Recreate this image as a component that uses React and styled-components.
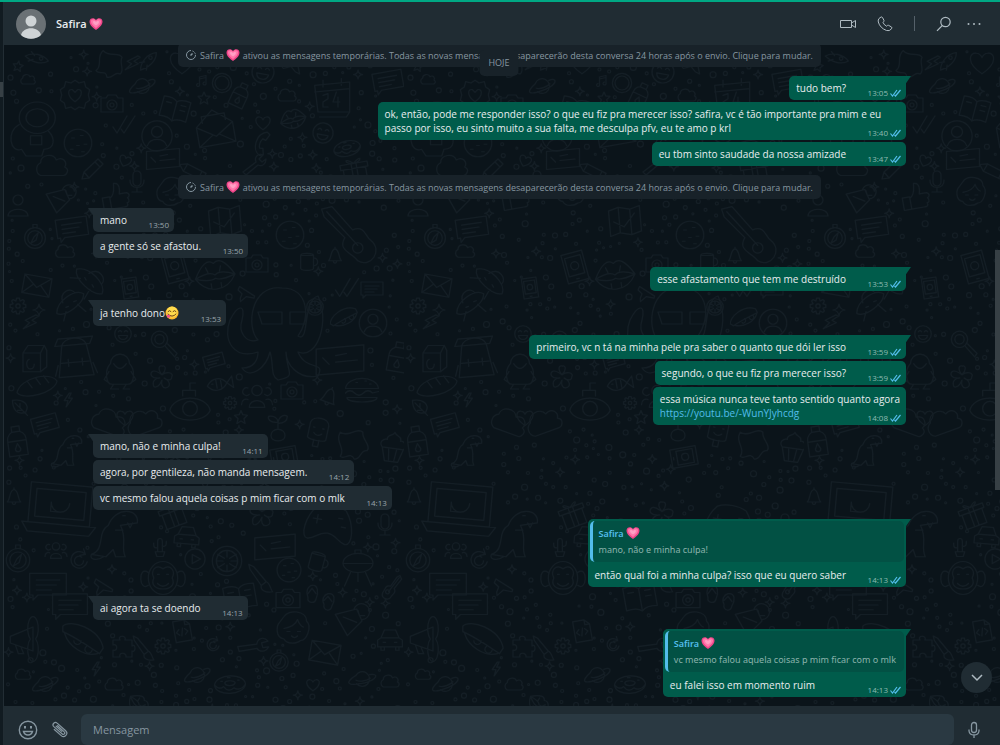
import React from 'react';
import styled, {createGlobalStyle, css} from 'styled-components';

const Color = {
    BACK: '#0b141a',
    DOODLE: '#141e25',
    PANEL: '#202c33',
    FIELD: '#2a3942',
    NOTICE: '#182229',
    GREEN: '#00a884',
    OUT: '#005c4b',
    QUOTE: '#025144',
    TEXT: '#e9edef',
    MUTED: '#8696a0',
    ICON: '#aebac1',
    BLUE: '#53bdeb',
};

const NOTICE_TEXT = 'ativou as mensagens temporárias. Todas as novas mensagens desaparecerão desta conversa 24 horas após o envio. Clique para mudar.';

const groups = [
    {notice: true},
    {
        out: true,
        items: [
            {text: 'tudo bem?', time: '13:05'},
            {text: 'ok, então, pode me responder isso? o que eu fiz pra merecer isso? safira, vc é tão importante pra mim e eu passo por isso, eu sinto muito a sua falta, me desculpa pfv, eu te amo p krl', time: '13:40'},
            {text: 'eu tbm sinto saudade da nossa amizade', time: '13:47'},
        ],
    },
    {notice: true},
    {
        items: [
            {text: 'mano', time: '13:50'},
            {text: 'a gente só se afastou.', time: '13:50'},
        ],
    },
    {out: true, items: [{text: 'esse afastamento que tem me destruído', time: '13:53'}]},
    {items: [{text: 'ja tenho dono', face: true, time: '13:53'}]},
    {
        out: true,
        items: [
            {text: 'primeiro, vc n tá na minha pele pra saber o quanto que dói ler isso', time: '13:59'},
            {text: 'segundo, o que eu fiz pra merecer isso?', time: '13:59'},
            {text: 'essa música nunca teve tanto sentido quanto agora', link: 'https://youtu.be/-WunYJyhcdg', time: '14:08'},
        ],
    },
    {
        items: [
            {text: 'mano, não e minha culpa!', time: '14:11'},
            {text: 'agora, por gentileza, não manda mensagem.', time: '14:12'},
            {text: 'vc mesmo falou aquela coisas p mim ficar com o mlk', time: '14:13'},
        ],
    },
    {
        out: true,
        items: [{
            quote: 'mano, não e minha culpa!',
            text: 'então qual foi a minha culpa? isso que eu quero saber',
            time: '14:13',
        }],
    },
    {items: [{text: 'ai agora ta se doendo', time: '14:13'}]},
    {
        out: true,
        items: [{
            quote: 'vc mesmo falou aquela coisas p mim ficar com o mlk',
            text: 'eu falei isso em momento ruim',
            time: '14:13',
        }],
    },
];

// every shape lives in a -12..12 box
const shapes = {
    star: 'M0-11 3-4 11-3 5 3 7 11 0 7-7 11-5 3-11-3-3-4Z',
    spark: 'M0-11Q1-1 11 0 1 1 0 11-1 1-11 0-1-1 0-11Z',
    heart: 'M0 10C-15 0-12-10-5-9-2-9 0-5 0-5S2-9 5-9C12-10 15 0 0 10Z',
    bolt: 'M2-11-6 1H0L-3 11 7-3H1L5-11Z',
    note: 'M-5 7V-8L8-11V4M-5-4 8-7M-5 7A3 3 0 1 1-8 5M8 4A3 3 0 1 1 5 2',
    drop: 'M0-10C4-3 7 1 6 5A6 6 0 0 1-6 5C-7 1-4-3 0-10Z',
    cloud: 'M-8 6A5 5 0 0 1-8-3C-8-9 1-10 3-5 8-8 11-3 9 0 13 2 10 6 8 6Z',
    planet: 'M-6-2A6.500 6.500 0 1 1-4 5M-6-2C-15 6-12 9 3 3 14-2 14-8 6-5M-5 2C-1 3 4 1 7-2',
    camera: 'M-11-6H-6L-4-9H4L6-6H11V8H-11ZM5 1A5 5 0 1 1-5 1 5 5 0 1 1 5 1M2 1A2 2 0 1 1-2 1 2 2 0 1 1 2 1',
    ring: 'M11 0A11 11 0 1 1-11 0 11 11 0 1 1 11 0M8 0A8 8 0 1 1-8 0 8 8 0 1 1 8 0',
    compass: 'M10 1A10 10 0 1 1-10 1 10 10 0 1 1 10 1M7 1A7 7 0 1 1-7 1 7 7 0 1 1 7 1M3-4 1 3-4 6-1 0ZM-2-9V-12H2V-9',
    person: 'M11 0A11 11 0 1 1-11 0 11 11 0 1 1 11 0M4-3A4 4 0 1 1-4-3 4 4 0 1 1 4-3M-7 7C-5 1 5 1 7 7',
    bust: 'M5-5A5 5 0 1 1-5-5 5 5 0 1 1 5-5M-10 11C-10 2 10 2 10 11Z',
    people: 'M4-5A4 4 0 1 1-4-5 4 4 0 1 1 4-5M-6 8C-6 1 6 1 6 8ZM-6-2A3 3 0 1 1-7-7M-12 6C-12 2-9 1-7 2M6-2A3 3 0 1 0 7-7M12 6C12 2 9 1 7 2',
    smile: 'M11 0A11 11 0 1 1-11 0 11 11 0 1 1 11 0M-6-3Q-4-6-2-3M2-3Q4-6 6-3M-6 2H6C5 9-5 9-6 2Z',
    cookie: 'M11 0A11 11 0 1 1-11 0 11 11 0 1 1 11 0M-5-4H-3M2-6H4M5 1H7M-1 2H1M-6 5H-4M3 7H5',
    badge: 'M0-11 3-9 7-10 8-6 11-4 10 0 11 4 8 6 7 10 3 9 0 11-3 9-7 10-8 6-11 4-10 0-11-4-8-6-7-10-3-9ZM0 5C-7 0-5-5-2-4L0-2 2-4C5-5 7 0 0 5Z',
    gear: 'M-2-11H2L3-7 7-9 9-7 7-3 11-2V2L7 3 9 7 7 9 3 7 2 11H-2L-3 7-7 9-9 7-7 3-11 2V-2L-7-3-9-7-7-9-3-7ZM3 0A3 3 0 1 1-3 0 3 3 0 1 1 3 0',
    citrus: 'M11 0A11 11 0 1 1-11 0 11 11 0 1 1 11 0M2-2 7-5M-2-2-7-5M2 2 7 5M-2 2-7 5M0-3V-8M0 3V8M-3 0H-8M3 0H8M8 0A8 8 0 1 1-8 0 8 8 0 1 1 8 0',
    slice: 'M-11-5 5-9 9 0-2 11ZM-5-3 5 1M3-9A6 6 0 1 1 9-1M6-8 7-4 11-4',
    flower: 'M0-3C-5-9-2-12 0-11 4-12 4-7 0-3 6-7 11-4 9-1 9 3 4 2 2 0 8 3 8 8 4 9 0 10-1 5 0 2-3 9-8 10-8 6-9 2-5 0-2 0-9 1-12-3-9-6-6-8-2-4 0-3',
    leaf: 'M-9-8C4-10 12-3 7 6-4 11-9 1-9-8ZM-6-5 9 10M0 1V-4M3 4H-3',
    bell: 'M-8 6C-4 2-6-8 0-9 6-8 4 2 8 6ZM-2 6C-2 10 2 10 2 6M0-9V-11',
    mug: 'M-8-6V8C-7 11 5 11 6 8V-6ZM-8-6C-8-9 6-9 6-6M6-3C12-4 12 6 6 5',
    envelope: 'M-11-7H11V8H-11ZM-11-7 0 2 11-7M-11 8-3 0M11 8 3 0',
    open: 'M-11-2 0-11 11-2V10H-11ZM-11-2 0 5 11-2M-7-4V-8H7V-4M-11 10-2 4M11 10 2 4',
    chat: 'M-11-7H11V6H-6L-9 9V6H-11ZM-7-3H7M-7 0H5M-7 3H2',
    phone: 'M-8-10-4-11-1-4-4-2C-3 2 0 5 3 6L5 3 11 6 10 10C0 15-13 1-8-10Z',
    mic: 'M-4-7A4 4 0 0 1 4-7V0A4 4 0 0 1-4 0ZM-7-2C-8 8 8 8 7-2M0 6V10M-5 10H5',
    tablet: 'M-8-11H8V11H-8ZM-6-8H6V6H-6ZM-1 9H1M3-1A3 3 0 1 1-3-1 3 3 0 1 1 3-1',
    laptop: 'M-10-8H10V5H-10ZM-8-6H8V3H-8ZM-12 5H12L10 8H-10ZM3-2A3 3 0 1 1-3-2L-3 1H0A3 3 0 0 0 3-2',
    pencil: 'M-11 10-9 3 5-10 10-5-4 9ZM-9 3-4 9M2-7 7-2',
    checks: 'M-11 2-7 8 3-9M-3 4 0 8 11-9',
    mag: 'M4-4A7 7 0 1 1-10-4 7 7 0 1 1 4-4M1-4A4 4 0 1 1-7-4 4 4 0 1 1 1-4M2 2 10 11 12 8 4 0',
    play: 'M11 0A11 11 0 1 1-11 0 11 11 0 1 1 11 0M-3-5V5L6 0Z',
    redo: 'M6-6A9 9 0 1 0 9 3M5-11 7-5 1-4M3-2A5 5 0 1 0 5 2',
    car: 'M-11 1-8-1-5-8H5L8-1 11 1V7H-11ZM-8-1H8M-8 7V10H-5V7M5 7V10H8V7M-6 3H-4M4 3H6',
    pad: 'M-7-8C-3-10 3-10 7-8 12-2 13 8 9 8 5 7 4 4 0 4-4 4-5 7-9 8-13 8-12-2-7-8ZM-6-4V0M-8-2H-4M4-4H6M6 0H8',
    book: 'M-11-8C-5-9-2-8 0-6 2-8 5-9 11-8V8C5 7 2 8 0 10-2 8-5 7-11 8ZM0-6V10M-8-4H-4M4-4H8M4 0H8',
    box: 'M-8-4H6V11H-8ZM-8-4-4-10H9L6-4M9-10 11-6V7L6 11M-3 1A3 4 0 1 0 1 5',
    pack: 'M-7-7C-5-12 5-12 7-7L10 11H-10ZM-11-7H9L11-11H-9ZM-8 3H8M-4 1V5M4 1V5M-10 4-12 10M10 4 12 10',
    bird: 'M-6-4A6 6 0 0 1 6-4C10 0 9 9 5 9H-5C-9 9-10 0-6-4ZM-4-4Q0 2 4-4M-4 9-6 12H-1M4 9 2 12H6M-7 1-10 6-7 8M7 1 10 6 7 8',
    fish: 'M-11 0C-6-7 2-6 6 0L11-5V5L6 0C2 6-6 7-11 0ZM-7-1H-6M-3-4V3M1-3V3',
    sub: 'M-11 3C-9-6 9-6 11 3 8 10-8 10-11 3ZM-4-5V-8H3V-5M0-8V-12H3M4 2A4 4 0 1 1-4 2 4 4 0 1 1 4 2',
    burger: 'M-11-1C-10-10 10-10 11-1ZM-11 2Q-8-1-5 2T1 2 7 2L11 1M-10 5H10C10 9-10 9-10 5M-4-5H-3M2-6H3M5-4H6',
    ice: 'M-7 5V-6C-6-12 6-12 7-6V5C5 7-5 7-7 5ZM-2 6V11H2V6M-4-3H-3M3-3H4M-3 1Q0 4 3 1',
    cup: 'M-8 1H8L5 11H-5ZM-8 1C-12-3-6-6-5-5-6-9-1-8 0-11 1-8 6-9 5-5 6-6 12-3 8 1M-3 2-2 10M3 2 2 10',
    bottle: 'M-3-11H3V-7C7-5 7-2 7 1V11H-7V1C-7-2-7-5-3-7ZM-7 0H7M-3-7H3M0 2 2 6A2 2 0 1 1-2 6Z',
    lips: 'M-12 1C-7-8-3-10 0-7 3-10 7-8 12 1 6 11-6 11-12 1ZM-12 1Q-3-3 0 0 3-3 12 1 3 4 0 2-3 4-12 1M-5-5-4-2M4-5 3-2M-3 5V8M3 5V8',
    ufo: 'M-12 4C-9-5 7-9 12-3 10 4-7 9-12 4ZM-5-2C-5-11 5-11 6-6M-5 5-9 11M5 3 9 10M-4 2H-2M3 0H5',
    squid: 'M-4 2C-7-1-6-12 2-11 9-11 9-3 6 1 9 3 7-8 11-9 14-3 11 7 6 5 8 10 13 7 11 11 6 12 3 8 3 5 3 10 6 11 1 12-1 11 0 8-1 5-2 9-6 12-8 9-5 9-4 7-4 5-10 7-13 2-11-3-9-7-7-7-8-3-9 0-7 3-4 2ZM-4-5H2V-2H-3ZM4-5H8V-2H4Z',
    dino: 'M-11 8C-5 6-9-1-4-4-1-12 9-11 8-5L1-4C4 2 1 5 3 9H-1L-2 6-5 9ZM2-8H3M-1-2H2M4-5 5-3 6-5M-11 8C-12 10-9 11-6 9',
    plane: 'M-11 2 10-9 12-7 5 1 7 11 3 9-1 4-8 6Z',
    guitar: 'M-11-10-7-11 1-2C6-4 6 1 8 2 13 6 8 13 3 10 1 7-5 6-2 1L-10-7ZM5 5A2 2 0 1 1 1 5 2 2 0 1 1 5 5M-9-9 3 4',
    pizza: 'M-11-7C-7-11 9-6 11 5L9 8C3 4-4-1-11-4ZM-10-3C-8 4 1 10 8 8M-5 1A2 2 0 1 0-1 1M2 4A2 2 0 1 0 5 6',
    horn: 'M-11-2 6-9V9L-11 3ZM8 0A4 9 0 1 1 4 0 4 9 0 1 1 8 0M-7 5-5 11H-1L-3 6',
    puzzle: 'M-10-8H-3C-6-13 4-13 2-8H9V-2C13-5 13 5 9 3V9H3C4 4-5 4-3 9H-10V2C-5 4-5-5-10-3Z',
    brush: 'M-9-11-5-9 5 3 1 6-8-7ZM1 6C0 10 5 12 10 11 8 8 8 4 5 3',
    code: 'M-8-11H4L9-6V11H-8ZM4-11V-6H9M-3-2-6 1-3 4M3-2 6 1 3 4M1-3-1 5',
    tool: 'M-11 7 2-3C0-8 4-12 9-10L5-6 8-3 12-6C12-1 8 2 4 0L-8 10Z',
    monkey: 'M8 0A8 9 0 1 1-8 0 8 9 0 1 1 8 0M-8-3C-14-7-13 8-8 4M8-3C14-7 13 8 8 4M0-5C-4-8-7-4-5 0-9 8 9 8 5 0 7-4 4-8 0-5M-3-2H-2M2-2H3M-3 3Q0 6 3 3',
    girl: 'M-6-7C-3-12 9-11 9-4 13 0 9 9 5 9 3 11-4 12-6 8-12 7-11-1-9-3ZM-6 1C-1 0 2-2 3-5 4-2 6 0 7 0M-4 3H-2M3 3H5M-1 6Q1 8 3 6',
    blob: 'M-9-9C-3-5 3-13 7-9 6-4 13 0 10 4 5 3 6 10 1 10-2 4-6 11-9 8-5 2-13-2-9-9Z',
    thumb: 'M-11-1H-5V9H-11ZM-5 0C0-2-1-8 0-11 5-11 4-5 3-2H9C12 0 10 2 9 2 11 5 9 6 8 6 9 9 7 9 5 9H-5',
    map: 'M-11-8-4-10 4-8 11-10V8L4 10-4 8-11 10ZM-4-10V8M4-8V10M-8 0-1 4 7-5',
    cal: 'M-11-7 10-9V9H-9ZM-11-3 10-5M-6-10V-6M5-11V-7M-8 12H8L10 9M-6-1-3-2V1L-6 3V6H-3M2-3 0 3H4M3 0V6',
    gift: 'M-9-3H9V10H-9ZM-11-7H11V-3H-11ZM-2-7V10M2-7V10M0-7C-8-14-7-7 0-7 8-14 7-7 0-7',
    grill: 'M-10-3C-10-12 10-12 10-3ZM-10-3C-9 5 9 5 10-3M-5 3-9 12M5 3 9 12M0 3V9M-2-10V-12H2V-10',
    flops: 'M-7-10C-1-12-1-4-3 0-4 4-10 3-9-1-11-6-9-9-7-10ZM-9-4-6-8-3-4M6-4C12-5 11 2 9 5 8 10 2 9 3 4 1 0 3-3 6-4ZM3 1 6-2 9 2',
    cactus: 'M-3 6V-7C-3-12 3-12 3-7V6M-3 1C-8 2-8-1-8-5M3-1C8 0 8-3 8-7M-6 6H6L4 12H-4Z',
    donut: 'M12 0C11 9-11 10-12 1-11-8 11-9 12 0ZM4-1C3 2-4 2-4-1-3-3 3-3 4-1M-12 1Q-8 5-5 2-1 7 3 3 8 6 12 0M-7-2H-6M6-3H7M-2-5H0',
    bread: 'M-12 4C-10-5 8-9 12-3 11 4-8 9-12 4ZM-6-3-3 1M-1-5 2-1M4-6 7-2',
    bars: 'M-11-5 11-7V5L-11 7ZM-8-1-5 2M-2 1 8 0M-2-2 3-3',
    rocket: 'M-9 11C-9 2-1-9 10-10 10 0 1 8-9 11ZM-4 1-10 2M-1 5-2 11M5-4A2 2 0 1 1 1-4 2 2 0 1 1 5-4',
    plant: 'M0 11C-8 11-8 2 0 1 8 2 8 11 0 11ZM0 1V-5C-7-4-9-8-8-10-3-11 0-8 0-5 1-10 5-12 8-10 8-6 5-4 0-4',
    astro: 'M9-5A8 7 0 1 1-7-5 8 7 0 1 1 9-5M6-5A5 4 0 1 1-4-5 5 4 0 1 1 6-5M-7-2C-13 1-11 11-6 9L-4 12H3L4 9C9 9 9 4 6 1M-2 3H3V7H-2Z',
};

// shape, x, y, size, rotation inside the 400 x 720 tile
const doodles = [
    ['star', 14, 21, 11, 10], ['rocket', 33, 13, 20, 60], ['blob', 106, 20, 30, 20], ['bolt', 128, 18, 20, 30],
    ['rocket', 144, 16, 20, 0], ['heart', 178, 18, 26, 0], ['ring', 218, 38, 21, 0], ['smile', 259, 27, 24, 10],
    ['plane', 288, 17, 26, 0], ['badge', 71, 50, 32, 0], ['cloud', 24, 35, 16, 0], ['planet', 138, 41, 27, 0],
    ['camera', 108, 59, 24, 0], ['book', 171, 64, 30, 15], ['note', 198, 36, 12, 0], ['bottle', 236, 50, 26, 25],
    ['cloud', 283, 51, 20, 0], ['cal', 329, 52, 40, 0], ['chat', 384, 36, 32, -10], ['star', 200, 53, 13, 0],
    ['astro', 31, 84, 54, 0], ['cookie', 74, 98, 30, 0], ['checks', 120, 80, 24, 0], ['person', 153, 91, 33, 0],
    ['open', 211, 83, 40, -10], ['heart', 259, 78, 16, 0], ['lips', 289, 74, 26, -15], ['smile', 319, 88, 22, 10],
    ['phone', 259, 98, 22, 60], ['donut', 343, 103, 27, -10], ['pencil', 89, 124, 24, 0], ['heart', 121, 116, 13, 20],
    ['bars', 159, 114, 36, 0], ['mic', 133, 137, 24, 0], ['thumb', 112, 152, 30, -10], ['girl', 167, 146, 32, 0],
    ['cloud', 48, 122, 34, 0], ['pencil', 190, 127, 26, 70], ['tool', 250, 120, 24, 0], ['gift', 351, 127, 30, -10],
    ['slice', 55, 155, 28, 0], ['bust', 14, 160, 24, 0], ['compass', 31, 192, 25, 0], ['chat', 68, 183, 34, -8],
    ['cloud', 61, 207, 21, 0], ['map', 221, 176, 34, -5], ['cookie', 286, 190, 30, 0], ['guitar', 346, 190, 62, 0],
    ['mug', 304, 216, 22, 0], ['bell', 331, 211, 19, 0], ['camera', 253, 219, 24, 0], ['lips', 211, 230, 40, -8],
    ['tablet', 171, 222, 32, -15], ['envelope', 33, 240, 30, 10], ['ufo', 66, 258, 32, -20], ['gear', 14, 261, 17, 0],
    ['spark', 35, 265, 13, 0], ['ufo', 86, 236, 34, 60], ['tablet', 126, 243, 22, -8], ['plane', 241, 248, 18, 60],
    ['checks', 343, 243, 25, 0], ['chat', 368, 244, 24, 0], ['squid', 270, 287, 96, 0], ['citrus', 311, 262, 18, 0],
    ['pizza', 340, 272, 28, -60], ['person', 369, 278, 30, 0], ['bolt', 26, 277, 20, 30], ['box', 29, 313, 30, 0],
    ['pack', 71, 312, 42, -5], ['bird', 116, 325, 38, 0], ['mag', 159, 299, 28, 0], ['smile', 119, 289, 18, 0],
    ['flower', 158, 333, 26, 0], ['fish', 216, 339, 28, -10], ['chat', 210, 316, 22, -15], ['bars', 336, 315, 52, 0],
    ['bottle', 394, 312, 32, 10], ['burger', 358, 345, 36, 0], ['camera', 288, 346, 24, 0], ['sub', 186, 360, 44, 0],
    ['gear', 226, 358, 14, 0], ['people', 253, 352, 31, 0], ['bread', 33, 341, 40, 0], ['leaf', 16, 362, 20, 0],
    ['bolt', 64, 355, 15, 0], ['bell', 325, 352, 22, 20], ['chat', 41, 379, 28, -15], ['heart', 121, 373, 18, 0],
    ['cloud', 105, 378, 38, 20], ['cloud', 140, 378, 38, -20], ['star', 237, 372, 14, 0], ['plant', 274, 383, 28, 0],
    ['ice', 314, 387, 32, 12], ['blob', 349, 400, 34, 0], ['cup', 389, 402, 32, 8], ['bottle', 13, 396, 32, -8],
    ['dino', 65, 406, 38, 0], ['tablet', 280, 412, 28, 80], ['bell', 10, 452, 20, 0], ['laptop', 56, 464, 74, 5],
    ['dino', 114, 490, 58, 0], ['gift', 169, 470, 28, -20], ['car', 183, 491, 27, 5], ['flower', 258, 470, 28, 0],
    ['pad', 325, 480, 50, 10], ['mic', 381, 480, 24, 0], ['cactus', 156, 502, 19, 0], ['play', 191, 514, 22, 0],
    ['citrus', 223, 516, 32, 0], ['bars', 271, 502, 44, 0], ['mug', 314, 516, 24, 15], ['grill', 354, 523, 36, 0],
    ['guitar', 388, 543, 24, 80], ['monkey', 159, 533, 44, 0], ['compass', 14, 514, 28, 0], ['redo', 75, 514, 22, 0],
    ['people', 52, 506, 22, 0], ['chat', 44, 540, 40, 0], ['chat', 66, 560, 38, 0], ['plane', 98, 541, 20, 60],
    ['brush', 256, 533, 30, 0], ['cookie', 285, 525, 26, 0], ['flops', 316, 554, 32, 0], ['camera', 284, 554, 26, 0],
    ['book', 236, 552, 34, -10], ['pizza', 79, 594, 44, 0], ['horn', 21, 594, 32, 0], ['puzzle', 119, 603, 24, 0],
    ['brush', 139, 603, 26, 0], ['gear', 159, 601, 17, 0], ['code', 178, 586, 23, -10], ['redo', 209, 599, 16, 0],
    ['tool', 249, 601, 28, 30], ['girl', 289, 582, 36, 0], ['slice', 346, 576, 32, 0], ['car', 386, 594, 27, 0],
    ['envelope', 321, 607, 32, 10], ['planet', 41, 639, 27, 0], ['planet', 193, 630, 27, 0], ['donut', 226, 639, 31, 0],
    ['compass', 275, 616, 22, 0], ['planet', 358, 634, 27, 10], ['cloud', 386, 637, 20, 0], ['cloud', 19, 630, 17, 0],
    ['cloud', 110, 640, 20, 0], ['lips', 135, 660, 24, 50], ['bolt', 92, 624, 15, 0], ['heart', 309, 640, 14, 0],
];

// small circles and sparks in the free space between the drawings
const fillers = (() => {
    const list = [];
    let seed = 7;
    const rand = () => {
        seed = (seed * 16807) % 2147483647;
        return seed / 2147483647;
    };
    for (let i = 0; i < 2600; i++) {
        const x = 4 + rand() * 392;
        const y = 4 + rand() * 690;
        const r = 1 + Math.round(rand() * 2) / 2 + (rand() > 0.7 ? 1 : 0);
        const hit = doodles.some(([, dx, dy, size]) => Math.hypot(dx - x, dy - y) < size * 0.52 + r + 1)
            || list.some((item) => Math.hypot(item.x - x, item.y - y) < item.r + r + 4);
        if (!hit) {
            list.push({x, y, r, kind: rand() > 0.9 ? 'spark' : 'dot'});
        }
    }
    return list;
})();

function Doodles() {
    return (
        <Wallpaper aria-hidden="true">
            <defs>
                <pattern id="doodles" width="400" height="720" patternUnits="userSpaceOnUse">
                    <g fill="none" stroke={Color.DOODLE} strokeLinejoin="round" strokeLinecap="round">
                        {doodles.map(([name, x, y, size, turn], i) => (
                            <path key={i}
                                  d={shapes[name]}
                                  strokeWidth={24 / size * 1.2}
                                  transform={`translate(${x} ${y}) rotate(${turn}) scale(${size / 24})`}
                            />
                        ))}
                        {fillers.map(({x, y, r, kind}, i) => (
                            kind === 'dot'
                                ? <circle key={i} cx={x} cy={y} r={r} strokeWidth="1.1"/>
                                : <path key={i} d={shapes.spark} strokeWidth="3"
                                        transform={`translate(${x} ${y}) scale(.4)`}/>
                        ))}
                    </g>
                </pattern>
            </defs>
            <rect width="100%" height="100%" fill="url(#doodles)"/>
        </Wallpaper>
    );
}

function Heart() {
    return (
        <Emoji viewBox="0 0 28 28" role="img" aria-label="💗">
            <path fill="#f0468a" d="M14 26C9 22 1 17 1 9 1 2 10 0 14 6 18 0 27 2 27 9 27 17 19 22 14 26Z"/>
            <path fill="#ff78ab" d="M14 22C10 19 4 15 4 9 4 4 11 3 14 8 17 3 24 4 24 9 24 15 18 19 14 22Z"/>
            <path fill="#ff9fc4" d="M14 17C11 15 8 13 8 10 8 7 12 7 14 10 16 7 20 7 20 10 20 13 17 15 14 17Z"/>
        </Emoji>
    );
}

function Face() {
    return (
        <Emoji viewBox="0 0 28 28" role="img" aria-label="😋">
            <circle cx="14" cy="14" r="13" fill="#fdb92c"/>
            <circle cx="14" cy="12" r="11" fill="#ffdb4d"/>
            <path fill="none" stroke="#6b4213" strokeWidth="2" strokeLinecap="round" d="M6 11Q9 7 12 11M16 11Q19 7 22 11M6 16Q14 25 22 16"/>
            <path fill="#f0508a" d="M5 17C8 17 11 19 11 21 9 25 5 24 4 21 3 19 4 18 5 17Z"/>
        </Emoji>
    );
}

function Ticks() {
    return (
        <svg width="11" height="8" viewBox="0 0 22 16" fill="none" stroke={Color.BLUE} strokeWidth="2.400" role="img" aria-label="Lida">
            <path d="M1 9 5 14 14 2M9 12 11 14 21 2"/>
        </svg>
    );
}

function Notice() {
    return (
        <NoticePill>
            <svg width="10" height="10" viewBox="0 0 20 20" fill="none" stroke="currentColor" strokeWidth="2" aria-hidden="true">
                <path d="M10 1A9 9 0 1 0 19 10" />
                <path d="M13 2A9 9 0 0 1 19 10" strokeDasharray="3 2"/>
                <path d="M9 11 13 7" strokeWidth="3"/>
            </svg>
            <span>Safira <Heart/> {NOTICE_TEXT}</span>
        </NoticePill>
    );
}

function Message({item, out, first}) {
    const {text, link, face, quote, time} = item;

    return (
        <Bubble $out={out} $first={first}>
            {quote && (
                <Quote>
                    <strong>Safira <Heart/></strong>
                    <span>{quote}</span>
                </Quote>
            )}
            <Body $tall={face}>
                {text}
                {face && <Face/>}
                {link && <><br/><a href={link}>{link}</a></>}
                <Spacer $out={out}/>
            </Body>
            <Meta $out={out}>
                <time>{time}</time>
                {out && <Ticks/>}
            </Meta>
        </Bubble>
    );
}

function App() {
    return (
        <Page>
            <GlobalStyle/>
            <Side><SideThumb/></Side>
            <Main>
                <Header>
                    <Avatar viewBox="0 0 30 30" role="img" aria-label="Foto de Safira">
                        <circle cx="15" cy="15" r="15" fill="#6a7175"/>
                        <circle cx="15" cy="12" r="5.500" fill="#cfd4d6"/>
                        <path d="M5 26C7 17 23 17 25 26A15 15 0 0 1 5 26Z" fill="#cfd4d6"/>
                    </Avatar>
                    <h1>Safira <Heart/></h1>
                    <Tools>
                        <IconButton aria-label="Chamada de vídeo">
                            <svg width="16" height="10" viewBox="0 0 16 10" fill="none" stroke="currentColor">
                                <path d="M.5 1.500H11.500V8.500H.5ZM11.500 4 15.500 1.500V8.500L11.500 6"/>
                            </svg>
                        </IconButton>
                        <IconButton aria-label="Chamada de voz">
                            <svg width="16" height="16" viewBox="0 0 16 16" fill="none" stroke="currentColor" strokeLinejoin="round">
                                <path d="M2 2.500 4 1Q5 .7 5.500 1.500L7 4.500Q7.200 5.300 6 6.300 6.500 8.500 9.500 10.200 10.500 9 11.500 9.300L14.500 11Q15.300 11.800 14.500 12.800 12.500 15.500 9.500 14.500 3 12 1.300 6 .8 3.800 2 2.500Z"/>
                            </svg>
                        </IconButton>
                        <Divider/>
                        <ToolPair>
                            <IconButton aria-label="Pesquisar">
                                <svg width="16" height="16" viewBox="0 0 16 16" fill="none" stroke="currentColor" strokeWidth="1.200">
                                    <circle cx="9.500" cy="6" r="4.700"/>
                                    <path d="M6.300 9.500 1 14.800"/>
                                </svg>
                            </IconButton>
                            <IconButton aria-label="Mais opções">
                                <svg width="14" height="4" viewBox="0 0 14 4" fill="currentColor">
                                    <circle cx="1.500" cy="2" r="1"/>
                                    <circle cx="7" cy="2" r="1"/>
                                    <circle cx="12.500" cy="2" r="1"/>
                                </svg>
                            </IconButton>
                        </ToolPair>
                    </Tools>
                </Header>

                <Chat>
                    <Doodles/>
                    <Messages>
                        {groups.map((group, i) => (
                            group.notice
                                ? <Notice key={i}/>
                                : (
                                    <Group key={i} $out={group.out}>
                                        {group.items.map((item, j) => (
                                            <Message key={j} item={item} out={group.out} first={j === 0}/>
                                        ))}
                                    </Group>
                                )
                        ))}
                    </Messages>
                    <Day>HOJE</Day>
                    <ChatThumb/>
                    <DownButton aria-label="Ir para o fim">
                        <svg width="12" height="8" viewBox="0 0 12 8" fill="none" stroke="currentColor" strokeWidth="1.500">
                            <path d="M1 1 6 6 11 1"/>
                        </svg>
                    </DownButton>
                </Chat>

                <Footer>
                    <IconButton aria-label="Emojis">
                        <svg width="20" height="20" viewBox="0 0 20 20" fill="none" stroke="currentColor" strokeWidth="1.400">
                            <circle cx="10" cy="10" r="8.700"/>
                            <path d="M5.500 11.500H14.500Q13.500 15 10 15T5.500 11.500Z"/>
                            <path d="M7 6V8.500M13 6V8.500" strokeWidth="2"/>
                        </svg>
                    </IconButton>
                    <IconButton aria-label="Anexar">
                        <svg width="17" height="17" viewBox="0 0 18 18" fill="none" stroke="currentColor" strokeWidth="1.300" strokeLinecap="round">
                            <path d="M7 5 14 11.500A1.500 1.500 0 0 1 12 13.800L3 6A2.500 2.500 0 0 1 6.500 2.300L15.500 10.300A3.500 3.500 0 0 1 10.800 15.500L3.500 9"/>
                            <path d="M5.500 5.500 11.500 11"/>
                        </svg>
                    </IconButton>
                    <Field aria-label="Mensagem" placeholder="Mensagem"/>
                    <IconButton aria-label="Gravar áudio">
                        <svg width="14" height="18" viewBox="-1 0 14 18" fill="none" stroke="currentColor" strokeWidth="1.300">
                            <rect x="3.500" y="1.500" width="5" height="10" rx="2.500"/>
                            <path d="M1 8.500V10Q1.500 14 6 14T11 10V8.500M6 14V17"/>
                        </svg>
                    </IconButton>
                </Footer>
            </Main>
        </Page>
    );
}

const GlobalStyle = createGlobalStyle`
    * {
        box-sizing: border-box;
    }
    body {
        margin: 0;
        background: ${Color.BACK};
        color: ${Color.TEXT};
        font-family: "Open Sans", "Noto Sans", sans-serif;
        font-size: 10px;
    }
    button, input {
        font: inherit;
    }
`;
const Page = styled.div`
    display: flex;
    height: 100vh;
    border-top: 2px solid ${Color.GREEN};
`;
const Side = styled.div`
    flex: none;
    width: 4px;
    padding-top: 80px;
    background: #111b21;
    border-right: 1px solid #222d34;
`;
const SideThumb = styled.div`
    height: 15px;
    background: #374045;
`;
const Main = styled.main`
    display: flex;
    flex: 1;
    flex-direction: column;
    min-width: 0;
`;
const Header = styled.header`
    display: flex;
    align-items: center;
    flex: none;
    height: 43px;
    padding: 0 19px 0 12px;
    background: ${Color.PANEL};
    h1 {
        flex: 1;
        margin: 0 0 0 10px;
        font-size: 11px;
        font-weight: 600;
        line-height: 16px;
    }
`;
const Avatar = styled.svg`
    width: 30px;
    height: 30px;
`;
const Tools = styled.div`
    display: flex;
    align-items: center;
    gap: 21px;
`;
const ToolPair = styled.div`
    display: flex;
    align-items: center;
    gap: 15px;
`;
const IconButton = styled.button`
    display: flex;
    align-items: center;
    padding: 0;
    border: 0;
    background: none;
    color: ${Color.ICON};
`;
const Divider = styled.span`
    width: 1px;
    height: 15px;
    background: #55616a;
`;
const Emoji = styled.svg`
    width: 14px;
    height: 14px;
    vertical-align: -3px;
`;
const Chat = styled.section`
    position: relative;
    flex: 1;
    min-height: 0;
    overflow: hidden;
`;
const Wallpaper = styled.svg`
    position: absolute;
    inset: 0;
    width: 100%;
    height: 100%;
`;
const Messages = styled.div`
    position: relative;
    display: flex;
    flex-direction: column;
    justify-content: flex-end;
    gap: 9px;
    height: 100%;
    margin-right: 6px;
    padding: 0 88px 9px 89px;
`;
const NoticePill = styled.div`
    display: flex;
    align-items: center;
    align-self: center;
    flex: none;
    gap: 4px;
    height: 24px;
    padding: 0 8px;
    border-radius: 5px;
    background: ${Color.NOTICE};
    color: ${Color.MUTED};
    font-size: 9px;
    white-space: nowrap;
`;
const Group = styled.div`
    display: flex;
    flex: none;
    flex-direction: column;
    align-items: ${({$out}) => ($out ? 'flex-end' : 'flex-start')};
    gap: 2px;
`;
const tail = css`
    &::before {
        content: '';
        position: absolute;
        top: 0;
        ${({$out}) => ($out ? 'right' : 'left')}: -5px;
        width: 10px;
        height: 8px;
        background: inherit;
        clip-path: ${({$out}) => ($out ? 'polygon(0 0, 100% 0, 50% 90%, 0 90%)' : 'polygon(0 0, 100% 0, 100% 90%, 50% 90%)')};
    }
`;
const Bubble = styled.div`
    position: relative;
    max-width: 65%;
    border-radius: 5px;
    background: ${({$out}) => ($out ? Color.OUT : Color.PANEL)};
    font-weight: 500;
    line-height: 14px;
    ${({$first}) => $first && tail}
`;
const Body = styled.div`
    padding: ${({$tall}) => ($tall ? '6px' : '5px')} 6px ${({$tall}) => ($tall ? '6px' : '5px')} 7px;
    a {
        color: ${Color.BLUE};
        text-decoration: none;
    }
`;
const Spacer = styled.span`
    display: inline-block;
    width: ${({$out}) => ($out ? '54px' : '41px')};
`;
const Meta = styled.div`
    position: absolute;
    right: 5px;
    bottom: 2px;
    display: flex;
    align-items: center;
    gap: 2px;
    color: ${({$out}) => ($out ? '#8fbbb2' : '#9aa5ab')};
    font-size: 8px;
    font-weight: 400;
    line-height: 11px;
`;
const Quote = styled.blockquote`
    position: relative;
    display: flex;
    flex-direction: column;
    gap: 2px;
    margin: 2px 2px 1px;
    padding: 5px 8px 5px 6px;
    border-left: 3px solid ${Color.BLUE};
    border-radius: 5px;
    background: ${Color.QUOTE};
    color: #8bb3ac;
    font-family: "Noto Sans", sans-serif;
    font-size: 9px;
    font-weight: 400;
    strong {
        color: ${Color.BLUE};
        font-weight: 600;
    }
`;
const Day = styled.div`
    position: absolute;
    top: 5px;
    left: calc(50% - 3px);
    padding: 6px 9px;
    border-radius: 5px;
    background: ${Color.NOTICE};
    color: ${Color.MUTED};
    font-size: 9px;
    line-height: 14px;
    transform: translateX(-50%);
`;
const ChatThumb = styled.div`
    position: absolute;
    top: 205px;
    right: 0;
    width: 5px;
    height: 240px;
    background: #374045;
`;
const DownButton = styled.button`
    position: absolute;
    right: 8px;
    bottom: 13px;
    display: flex;
    align-items: center;
    justify-content: center;
    width: 31px;
    height: 31px;
    padding: 0;
    border: 0;
    border-radius: 50%;
    background: ${Color.PANEL};
    color: ${Color.ICON};
`;
const Footer = styled.footer`
    display: flex;
    flex: none;
    gap: 13px;
    padding: 8px 19px 0 14px;
    background: ${Color.PANEL};
    ${IconButton} {
        color: ${Color.MUTED};
    }
`;
const Field = styled.input`
    flex: 1;
    min-width: 0;
    height: 31px;
    padding: 0 12px;
    border: 0;
    border-radius: 6px;
    background: ${Color.FIELD};
    color: ${Color.TEXT};
    font-size: 11px;
    &::placeholder {
        color: ${Color.MUTED};
        opacity: 1;
    }
`;

export default App;
